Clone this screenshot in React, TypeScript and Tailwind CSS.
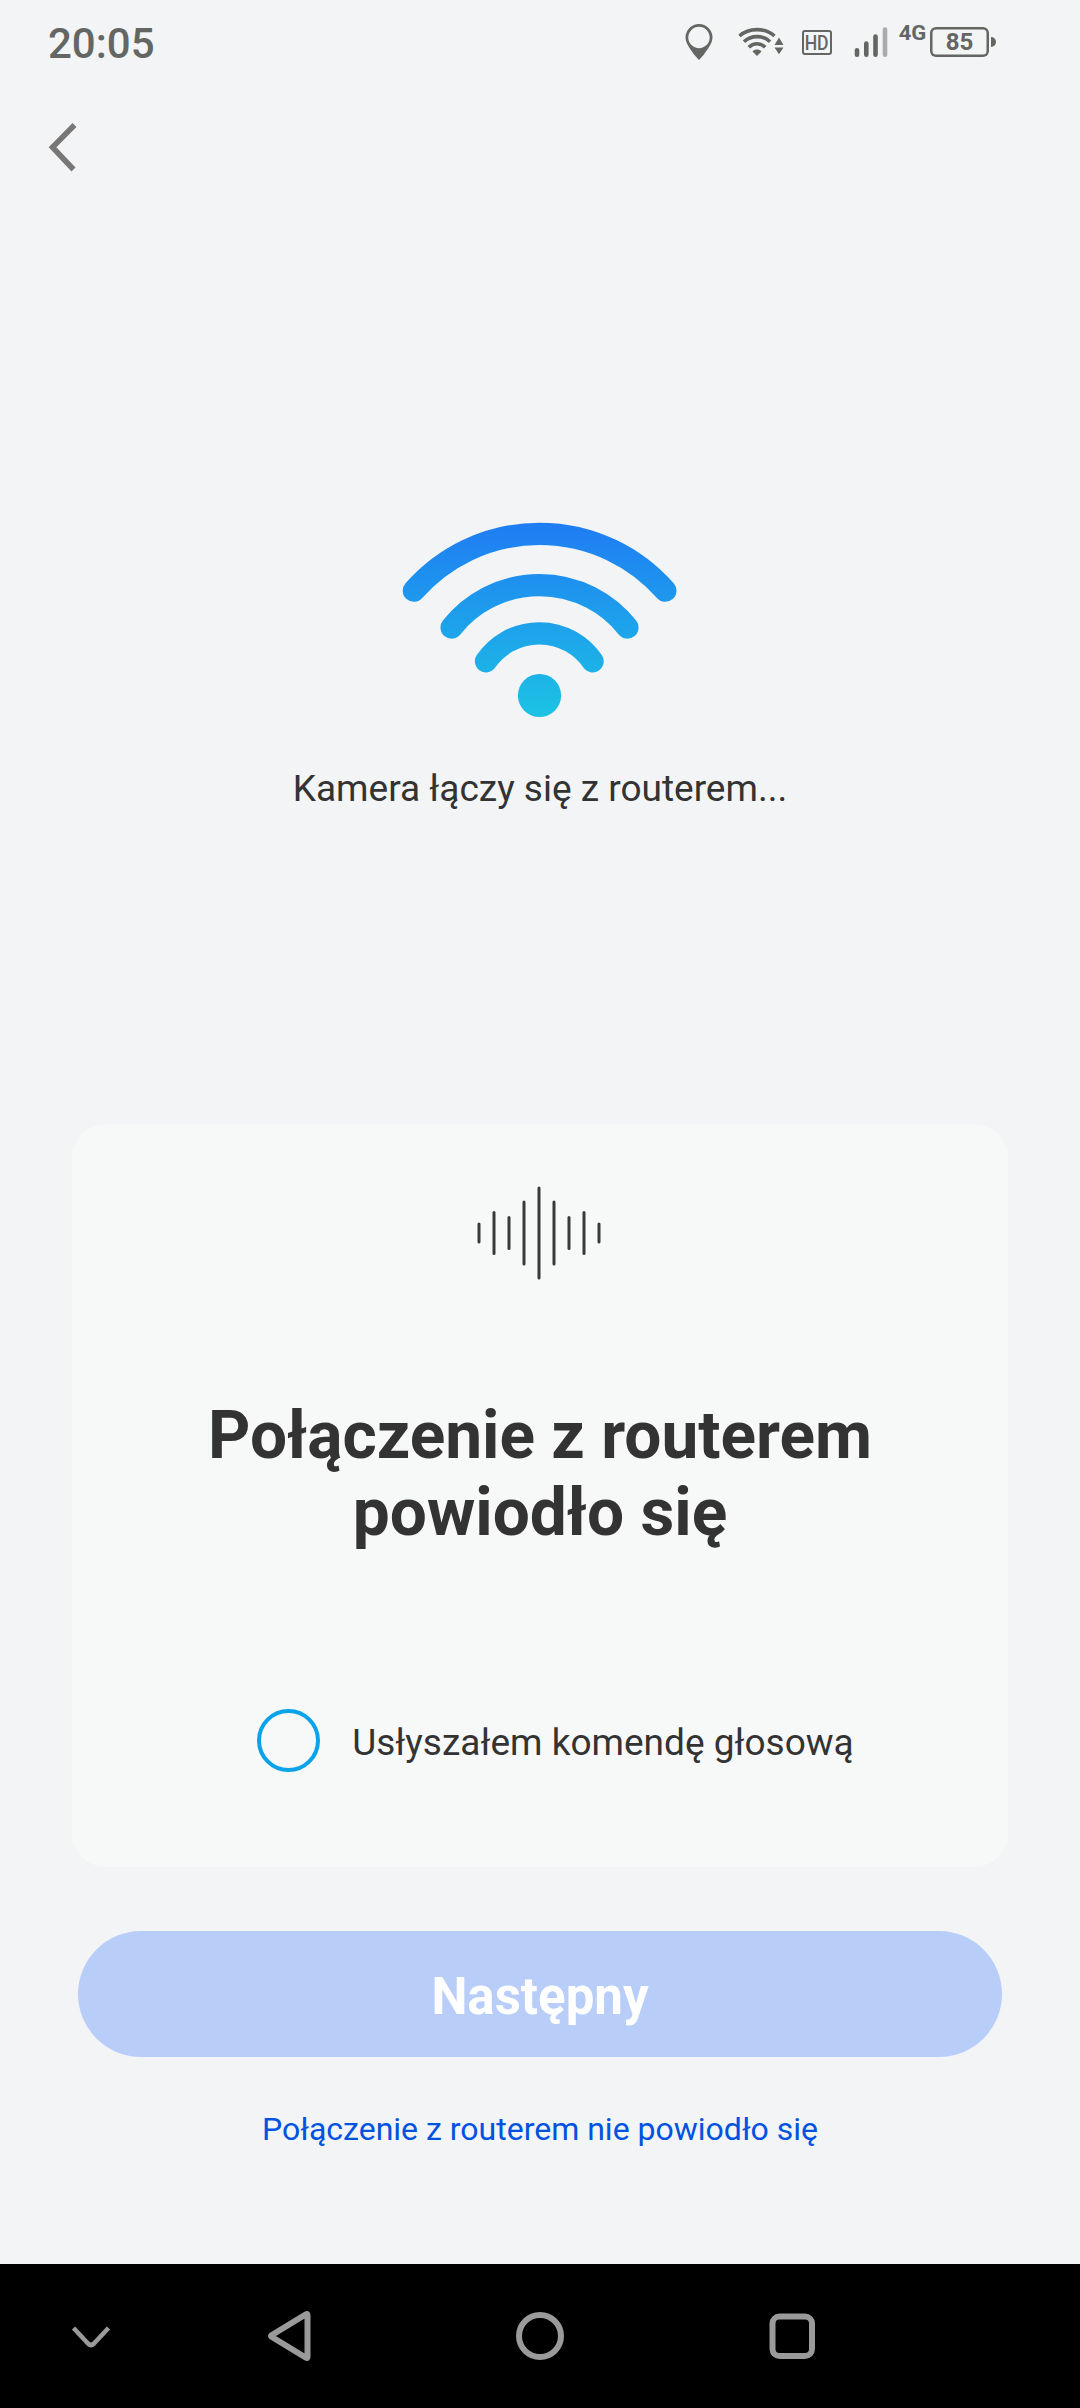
import React, { useState } from 'react';

const SOUND_BARS = [
  { x: 2, half: 9 },
  { x: 17, half: 20.5 },
  { x: 32, half: 15.5 },
  { x: 47, half: 31 },
  { x: 62, half: 45 },
  { x: 77, half: 31 },
  { x: 92, half: 15.5 },
  { x: 107, half: 20.5 },
  { x: 122, half: 9 },
];

const StatusBar: React.FC = () => (
  <div className="flex h-[84px] items-start justify-between pl-12 pr-[84px] text-[#646664]">
    <span className="mt-[19px] text-[42px] leading-[50px] font-medium">20:05</span>
    <div className="flex pt-[22px]">
      {/* location */}
      <svg className="mr-[25px] h-10 w-7" viewBox="0 0 28 40" fill="none">
        <path
          fill="currentColor"
          fillRule="evenodd"
          d="M14 2a13.5 13.5 0 0 1 13.5 13.5c0 6-6 13-8.5 17L14 38l-5-5.500C6.500 28.500.500 21.500.500 15.500A13.500 13.500 0 0 1 14 2Zm0 2.800a10.700 10.700 0 1 0 0 21.400a10.700 10.700 0 0 0 0-21.400Z"
        />
      </svg>
      {/* wifi */}
      <svg className="mr-[18px] h-10 w-[46px]" viewBox="0 0 46 40" fill="none" stroke="currentColor" strokeWidth="3.600">
        <path d="M1.500 14C11 5.500 27 5.500 36.500 14" />
        <path d="M6 19.700c7-6.800 19-6.800 26 0" />
        <path d="M10.800 25.200c4.700-4.600 11.700-4.600 16.400 0" />
        <path d="M14.500 29.500c2.500-2.600 6.500-2.600 9 0L19 34Z" fill="currentColor" stroke="none" />
        <path d="M41 15.500l4.500 7.500h-9ZM41 32.300l4.500-6.800h-9Z" fill="currentColor" stroke="none" />
      </svg>
      <span className="mt-2 mr-[22px] flex h-[25px] w-[30px] items-center justify-center rounded-[3px] border-2 border-current">
        <span className="scale-x-[.88] text-[20px] leading-none font-medium">HD</span>
      </span>
      {/* signal */}
      <svg className="mr-3 h-10 w-[34px]" viewBox="0 0 34 40" stroke="currentColor" strokeWidth="4.600" strokeLinecap="round">
        <path d="M3 28.300v4.500M12.300 21.500v11.300M21.500 14.500v18.300" />
        <path d="M31 7.500v25.300" opacity=".5" />
      </svg>
      <span className="mr-[4px] flex h-[22px] w-[26px] items-center justify-center">
        <span className="scale-x-110 text-[20px] leading-none font-bold">4G</span>
      </span>
      <span className="mt-[5px] flex h-[30px] w-[59px] items-center justify-center rounded-md text-[24px] leading-none font-bold shadow-[inset_0_0_0_2.5px_currentColor]">
        85
      </span>
      <span className="mt-[15px] ml-[2px] h-[10px] w-[5px] rounded-r-full bg-current" />
    </div>
  </div>
);

const WifiLogo: React.FC = () => (
  <svg className="h-[196px] w-[276px]" viewBox="402 522 276 196" fill="none">
    <defs>
      <linearGradient id="wifi" gradientUnits="userSpaceOnUse" x1="540" y1="522" x2="540" y2="718">
        <stop offset="0" stopColor="#1f7cf3" />
        <stop offset="1" stopColor="#1cc3e4" />
      </linearGradient>
    </defs>
    <g stroke="url(#wifi)" strokeWidth="22.300" strokeLinecap="round">
      <path d="M413.900 590.700A167.300 167.300 0 0 1 665.300 590.700" />
      <path d="M451.600 627.500A112.300 112.300 0 0 1 627.400 627.500" />
      <path d="M486 661.300A64.700 64.700 0 0 1 592.600 661.300" />
    </g>
    <circle cx="539.500" cy="695.500" r="21.600" fill="url(#wifi)" />
  </svg>
);

const NavBar: React.FC = () => (
  <nav className="h-36 bg-black">
    <svg className="h-36 w-full" viewBox="0 0 1080 144" fill="none" stroke="#9a9a9a">
      <path d="M73.500 64l14.500 15.500q3 3 6 0l14.500-15.500" strokeWidth="4.600" />
      <path d="M307.500 51v42q0 1.500-1.500.700l-34.500-21q-1-.700 0-1.400l34.500-21q1.500-.800 1.500.700Z" strokeWidth="6" strokeLinejoin="round" />
      <circle cx="540" cy="72" r="21" strokeWidth="6" />
      <rect x="772.500" y="52.500" width="39.500" height="39.500" rx="7" strokeWidth="6" />
    </svg>
  </nav>
);

export default function App() {
  const [heard, setHeard] = useState(false);

  return (
    <div className="flex h-[2408px] w-[1080px] flex-col bg-[#f2f4f6] font-['Roboto',sans-serif] text-[#333333]">
      <StatusBar />

      <header className="pt-[38px] pl-12">
        <button type="button" className="block" aria-label="Wstecz">
          <svg className="h-[50px] w-[30px]" viewBox="0 0 30 50" fill="none" stroke="#777777" strokeWidth="5.500">
            <path d="M26.500 3L4.500 25.200L25.500 47.500" />
          </svg>
        </button>
      </header>

      <section className="mt-[350px] flex flex-col items-center">
        <WifiLogo />
        <p className="mt-[49px] text-[37px] leading-[44px]">Kamera łączy się z routerem...</p>
      </section>

      <main className="mx-[72px] mt-[313px] flex h-[743px] flex-col items-center rounded-[34px] bg-[#f7f9f8]">
        <svg className="mt-[62px] mr-[2px] h-[94px] w-[124px]" viewBox="0 0 124 94" stroke="#3a3a3a" strokeWidth="3" strokeLinecap="round">
          {SOUND_BARS.map((bar) => (
            <line key={bar.x} x1={bar.x} x2={bar.x} y1={47 - bar.half} y2={47 + bar.half} />
          ))}
        </svg>
        <h1 className="mt-[117px] w-[740px] text-center text-[65.8px] leading-[77px] font-bold">
          Połączenie z routerem powiodło się
        </h1>
        <label className="mt-[158px] ml-[31px] flex items-center gap-[32px]">
          <input
            type="checkbox"
            checked={heard}
            onChange={(e) => setHeard(e.target.checked)}
            className="h-[63px] w-[63px] appearance-none rounded-full border-4 border-[#0aa2e9] checked:bg-[#0aa2e9]"
          />
          <span className="pt-[5px] text-[37px] leading-[44px]">Usłyszałem komendę głosową</span>
        </label>
      </main>

      <button
        type="button"
        disabled={!heard}
        className="mx-[78px] mt-16 h-[126px] rounded-full bg-[#2f73ff] pt-[7px] text-[51px] font-bold text-white disabled:bg-[#b9cdf9]"
      >
        Następny
      </button>
      <a href="#" className="mt-[50px] text-center text-[32px] leading-[44px] text-[#0052e0]">
        Połączenie z routerem nie powiodło się
      </a>

      <div className="mt-auto">
        <NavBar />
      </div>
    </div>
  );
}
